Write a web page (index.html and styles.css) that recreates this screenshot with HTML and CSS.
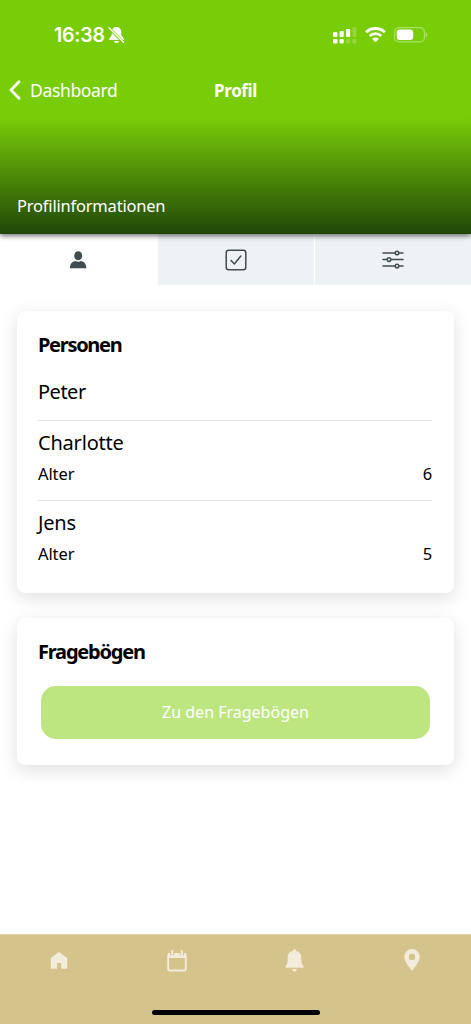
FILE: index.html
```html
<!DOCTYPE html>
<html lang="de">
<head>
<meta charset="utf-8">
<meta name="viewport" content="width=device-width, initial-scale=1">
<title>Profil</title>
<link rel="stylesheet" href="styles.css">
</head>
<body>
<div class="app">
  <header class="header">
    <div class="status">
      <div class="status-left">
        <span class="time">16:38</span>
        <svg class="muted" width="17" height="18" viewBox="0 0 17 18"><path fill="#fff" d="M8.500 1C5.800 1 3.800 3 3.800 6v2.500C3.800 10.500 1 11.500 1 14h15c0-2.500-2.800-3.500-2.800-5.500V6c0-3-2-5-4.700-5zM5.800 15h5.400c-.6 2.600-4.800 2.600-5.400 0z"/><path d="M.5 1.500l15 15" stroke="#79cc08" stroke-width="2.800"/><path d="M1 1.800l14.500 14.500" stroke="#fff" stroke-width="1.300" stroke-linecap="round"/></svg>
      </div>
      <div class="status-right">
        <svg width="24" height="17" viewBox="0 0 24 17"><g fill="#fff"><rect y="5" width="4.400" height="5" rx="1"/><rect x="6.500" y="4" width="4.200" height="6" rx="1"/><rect x="13" y="2" width="4.200" height="8" rx="1"/><rect y="12" width="4.400" height="4.500" rx="1.200"/><rect x="6.500" y="12" width="4.200" height="4.500" rx="1.200"/></g><g fill="#fff" opacity=".22"><rect x="19.500" y="0" width="4" height="10" rx="1"/><rect x="13" y="12" width="4.200" height="4.500" rx="1.200"/><rect x="19.500" y="12" width="4" height="4.500" rx="1.200"/></g></svg>
        <svg class="wifi" width="21" height="16" viewBox="0 0 21 16"><g fill="none" stroke="#fff" stroke-width="2.800"><path d="M1.200 5.300a13.300 13.300 0 0 1 18.600 0"/><path d="M4.700 9a8.300 8.300 0 0 1 11.600 0"/></g><path fill="#fff" d="M10.500 15.300L7 11.800c2-1.800 5-1.800 7 0z"/></svg>
        <svg class="battery" width="34" height="16" viewBox="0 0 34 16"><rect x=".6" y=".6" width="29.800" height="14.300" rx="4.500" fill="none" stroke="#fff" stroke-opacity=".4" stroke-width="1.100"/><rect x="2.700" y="2.500" width="16.500" height="10.500" rx="3" fill="#fff"/><path d="M31.700 5.500c2 .7 2 4 0 4.700z" fill="#fff" fill-opacity=".45"/></svg>
      </div>
    </div>
    <nav class="navbar">
      <a class="back"><svg width="12" height="20" viewBox="0 0 12 20"><path d="M10 1.800L2 10l8 8.200" fill="none" stroke="#fff" stroke-width="2.900" stroke-linecap="round" stroke-linejoin="round"/></svg><span class="back-label">Dashboard</span></a>
      <h1 class="title">Profil</h1>
      <span></span>
    </nav>
    <p class="subtitle">Profilinformationen</p>
  </header>
  <div class="tabs">
    <div class="tab tab-active"><svg class="person-icon" width="18" height="18" viewBox="0 0 18 18" fill="#414c50"><ellipse cx="9.200" cy="4.800" rx="4" ry="4.500"/><path d="M.8 17.200c.2-4 2-6.500 5.700-7.200 1.600.9 3.800.9 5.400 0 3.600.7 5.300 3.200 5.500 7.200z"/></svg></div>
    <div class="tab"><svg width="22" height="22" viewBox="0 0 22 22" fill="none" stroke="#414c50" stroke-width="1.500" stroke-linecap="round" stroke-linejoin="round"><rect x="1.200" y="1.200" width="19.600" height="19.600" rx="2.500"/><path d="M6 11.500l3.400 3.500 6.400-8"/></svg></div>
    <div class="tab"><svg width="22" height="20" viewBox="0 0 22 20" fill="#eef2f5" stroke="#414c50" stroke-width="1.500" stroke-linecap="round"><path d="M1 3h20M1 9.600h20M1 16.100h20"/><circle cx="15" cy="3" r="1.800"/><circle cx="7" cy="9.600" r="1.800"/><circle cx="15" cy="16.100" r="1.800"/></svg></div>
  </div>
  <main class="content">
    <section class="card persons">
      <h2 class="heading heading-persons">Personen</h2>
      <div class="person person-main"><div class="name name-peter">Peter</div></div>
      <div class="person">
        <div class="name">Charlotte</div>
        <div class="detail"><span>Alter</span><span>6</span></div>
      </div>
      <div class="person">
        <div class="name name-jens">Jens</div>
        <div class="detail"><span>Alter</span><span>5</span></div>
      </div>
    </section>
    <section class="card surveys">
      <h2 class="heading heading-surveys">Fragebögen</h2>
      <button class="button">Zu den Fragebögen</button>
    </section>
  </main>
  <footer class="footer">
    <div class="bottom-nav">
      <a class="nav-item"><svg width="24" height="26" viewBox="0 0 24 26" fill="#f3ecda"><path d="M12 5l8.200 6v10.700h-6V16H10v5.700H3.800V11z"/></svg></a>
      <a class="nav-item"><svg width="24" height="26" viewBox="0 0 24 26"><rect x="3.200" y="7" width="17.600" height="16.500" rx="1.200" fill="none" stroke="#f3ecda" stroke-width="1.900"/><path fill="#f3ecda" d="M3 6h18v5H3z"/><path d="M7.200 3.500v5M16.800 3.500v5" stroke="#d5c38c" stroke-width="4"/><path d="M7.200 3v6.500M16.800 3v6.500" stroke="#f3ecda" stroke-width="2"/></svg></a>
      <a class="nav-item"><svg width="24" height="26" viewBox="0 0 24 26" fill="#f3ecda"><path d="M12.500 2c1 0 1.500.7 1.500 2 3.800.7 5.300 3.400 5.300 6.500 0 4.500.3 7 2.200 8.800v1.500h-18v-1.500c1.900-1.800 2.200-4.300 2.200-8.800C5.700 7.400 7.200 4.700 11 4c0-1.300.5-2 1.500-2zM10.200 22h4.600c-.3 3.500-4.300 3.500-4.600 0z"/></svg></a>
      <a class="nav-item"><svg width="24" height="26" viewBox="0 0 24 26" fill="#f3ecda"><path fill-rule="evenodd" d="M12 2a7.700 7.700 0 0 0-7.700 7.700C4.300 15 9.500 20 12 24c2.500-4 7.700-9 7.700-14.300A7.700 7.700 0 0 0 12 2zm0 4.700a3.200 3.200 0 1 1 0 6.400 3.200 3.200 0 0 1 0-6.400z"/></svg></a>
    </div>
    <div class="home-indicator"></div>
  </footer>
</div>
</body>
</html>
```
FILE: styles.css
```css
* { box-sizing: border-box; }
body { margin: 0; background: #fff; font-family: "Noto Sans", sans-serif; color: #000; }
svg { display: block; flex: none; }
h1, h2, p { margin: 0; }
.app { height: 1024px; display: flex; flex-direction: column; overflow: hidden; }
.header { height: 234px; flex: none; color: #fff; background: linear-gradient(#79cc08 0 118px, #204708 234px); box-shadow: 0 2px 5px rgba(0, 0, 0, .55); position: relative; z-index: 1; }
.status { height: 70px; padding: 0 43px 0 54px; display: flex; justify-content: space-between; align-items: center; }
.status-left, .status-right { display: flex; align-items: center; }
.time { font: 600 19.500px/24px Inter, sans-serif; letter-spacing: -.2px; width: 51px; white-space: nowrap; }
.muted { margin-left: 3px; }
.wifi { margin-left: 8px; }
.battery { margin-left: 8px; }
.navbar { height: 40px; padding: 0 9px; display: grid; grid-template-columns: 1fr auto 1fr; align-items: center; }
.back { display: flex; align-items: center; gap: 9px; }
.back-label { font-size: 17.500px; letter-spacing: -.35px; line-height: 24px; }
.title { font-size: 17px; line-height: 24px; letter-spacing: -.4px; padding-top: 1px; }
.subtitle { padding: 84px 17px 0; font-size: 16.500px; line-height: 24px; letter-spacing: -.2px; }
.tabs { height: 51px; flex: none; display: grid; grid-template-columns: 157px 156px 156px; gap: 1px; }
.tab { display: flex; align-items: center; justify-content: center; background: #eef2f5; }
.tab-active { background: #fff; }
.person-icon { margin-right: 2px; }
.content { flex: 1; padding: 26px 17px; display: flex; flex-direction: column; gap: 25px; }
.card { border-radius: 8px; background: #fff; box-shadow: 0 5px 18px rgba(0, 0, 0, .13); padding: 19px 22px 0 21px; }
.persons { height: 282px; }
.surveys { height: 147px; }
.heading { font-size: 20px; line-height: 30px; font-weight: 700; }
.heading-persons { letter-spacing: -1.300px; }
.heading-surveys { letter-spacing: -1.200px; }
.person { height: 80px; padding-top: 8px; border-bottom: 1px solid #e6e6e6; }
.person:last-child { border-bottom: 0; }
.person-main { height: 61px; padding-top: 18px; }
.name { font-size: 20px; line-height: 28px; letter-spacing: -.2px; }
.name-peter { letter-spacing: -.5px; }
.detail { margin-top: 5px; display: flex; justify-content: space-between; font-size: 16.500px; line-height: 24px; letter-spacing: -.1px; }
.button { display: block; width: 389px; height: 53px; margin: 19px 0 0 3px; padding: 0 0 2px; border: 0; border-radius: 15px; background: #bde681; color: #fff; font: 16px/24px "Noto Sans", sans-serif; }
.footer { height: 90px; flex: none; background: #d5c38c; border-top: 1px solid #ded3ae; }
.bottom-nav { display: grid; grid-template-columns: repeat(4, 1fr); padding-top: 12px; }
.nav-item { display: flex; justify-content: center; }
.home-indicator { width: 168px; height: 5px; border-radius: 3px; margin: 37px auto 0; background: #000; }
```
